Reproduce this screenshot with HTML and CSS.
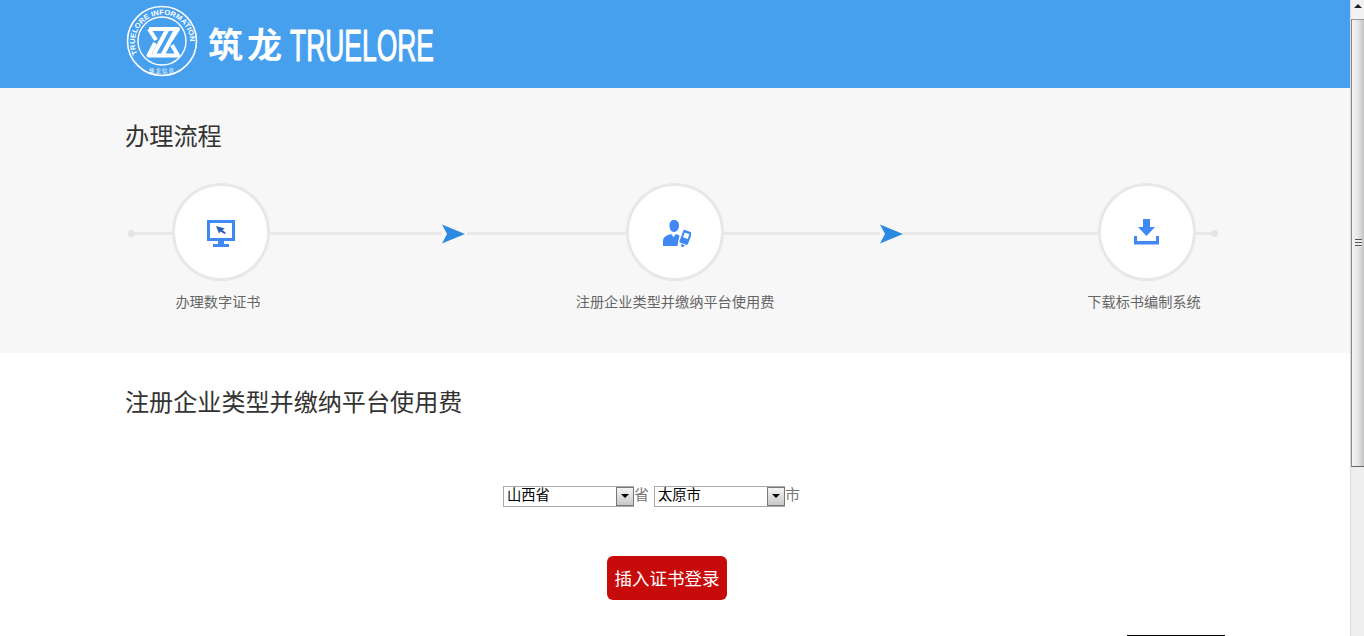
FILE: index.html
```html
<!DOCTYPE html>
<html lang="zh-CN">
<head>
<meta charset="utf-8">
<title>办理流程</title>
<link rel="stylesheet" href="styles.css">
</head>
<body>
<div class="window">
  <main class="page">
    <header class="topbar">
      <div class="container">
        <svg class="logo" width="500" height="88" viewBox="0 0 500 88">
          <defs><path id="ringTop" d="M12.500 54 A27.600 27.600 0 1 1 62.500 54"/></defs>
          <circle cx="37" cy="41" r="34.500" fill="none" stroke="#fff" stroke-width="1.600"/>
          <circle cx="37" cy="41" r="24" fill="none" stroke="#fff" stroke-width="1.400"/>
          <text class="ring-text" textLength="98" lengthAdjust="spacingAndGlyphs"><textPath href="#ringTop">TRUELORE INFORMATION</textPath></text>
          <text class="ring-cn" x="37" y="72.500" text-anchor="middle">筑龙信息</text>
          <path d="M24 29 H53 L46 40 M30 43 L23.500 55.500 H53 L47 45 M24 29 L31 40" fill="none" stroke="#fff" stroke-width="4" stroke-linejoin="round"/>
          <path d="M42 30 L29 54 M51 30 L38 54" fill="none" stroke="#fff" stroke-width="4.200"/>
          <text class="logo-cn" x="83" y="58" textLength="74" lengthAdjust="spacing">筑龙</text>
          <text class="logo-en" x="165" y="60.500" textLength="144" lengthAdjust="spacingAndGlyphs">TRUELORE</text>
        </svg>
      </div>
    </header>

    <section class="process">
      <div class="container">
        <h2 class="heading">办理流程</h2>
        <div class="flow">
          <span class="line line-start"></span>
          <div class="step">
            <div class="circle">
              <svg width="32" height="32" viewBox="0 0 32 32">
                <path fill="#4088f4" fill-rule="evenodd" d="M2 4H30V25H19V28H24V31H8V28H13V25H2ZM5 7V22H27V7Z"/>
                <path fill="#2e5fb8" d="M11 10L20 12.500L17.500 14L21 17L19.500 18L15.500 15.500L14 17.500Z"/>
              </svg>
            </div>
            <p class="label label-shift">办理数字证书</p>
          </div>
          <span class="line line-a"></span>
          <svg class="arrow" width="23" height="20" viewBox="0 0 23 20"><path fill="#2d8ae2" d="M0 0.500L23 10L0 19.500L5 10Z"/></svg>
          <span class="line line-b"></span>
          <div class="step">
            <div class="circle">
              <svg width="32" height="32" viewBox="0 0 32 32">
                <path fill="#4088f4" d="M15 4C18.500 4 20 6.500 20 9.500C20 13 18 16 15 16C12 16 10.500 13 10.500 9.500C10.500 6.500 11.500 4 15 4Z"/>
                <path fill="#4088f4" d="M4 30V25C4 21 8 19 12 18L14.500 21L17 18L20.500 19.500L18.500 30Z"/>
                <g transform="rotate(20 26 23)">
                  <rect x="20.500" y="13.500" width="11" height="15" rx="1.500" fill="#fff"/>
                  <rect x="21.500" y="14.500" width="9" height="13.500" rx="1.500" fill="#4088f4"/>
                  <rect x="23.500" y="17" width="5" height="5" fill="#fff"/>
                  <path fill="#4088f4" d="M23.500 29H28.500L26 32Z"/>
                </g>
              </svg>
            </div>
            <p class="label">注册企业类型并缴纳平台使用费</p>
          </div>
          <span class="line line-c"></span>
          <svg class="arrow" width="23" height="20" viewBox="0 0 23 20"><path fill="#2d8ae2" d="M0 0.500L23 10L0 19.500L5 10Z"/></svg>
          <span class="line line-d"></span>
          <div class="step">
            <div class="circle">
              <svg width="32" height="32" viewBox="0 0 32 32">
                <path fill="#4088f4" d="M12 3H19V11H24L15.500 20L7 11H12Z"/>
                <path fill="#4088f4" d="M3 20H6V25H25V20H28V28.500H3Z"/>
              </svg>
            </div>
            <p class="label label-shift">下载标书编制系统</p>
          </div>
          <span class="line line-end"></span>
        </div>
      </div>
    </section>

    <section class="register">
      <div class="container">
        <h2 class="heading heading-wide">注册企业类型并缴纳平台使用费</h2>
        <form class="region">
          <span class="select-box">
            <select class="select"><option>山西省</option></select>
            <span class="select-arrow"></span>
          </span>
          <span class="unit">省</span>
          <span class="select-box">
            <select class="select"><option>太原市</option></select>
            <span class="select-arrow"></span>
          </span>
          <span class="unit">市</span>
        </form>
        <div class="action"><button class="login" type="button">插入证书登录</button></div>
        <div class="foot"><span class="foot-rule"></span></div>
      </div>
    </section>
  </main>

  <aside class="scrollbar">
    <div class="scroll-up"></div>
    <div class="scroll-thumb"><span class="grip"></span></div>
    <div class="scroll-track"></div>
  </aside>
</div>
</body>
</html>
```

FILE: styles.css
```css
* { box-sizing: border-box; }

html, body {
  margin: 0;
  height: 636px;
  overflow: hidden;
  background: #fff;
}

body {
  font-family: "Noto Sans CJK SC", "Liberation Sans", sans-serif;
  color: #333;
}

.window {
  display: flex;
  height: 636px;
  overflow: hidden;
}

.page {
  flex: 1;
  min-width: 0;
}

.container {
  width: 1100px;
  margin: 0 auto;
}

.topbar {
  height: 88px;
  background: #46a0ee;
}

.logo {
  display: block;
}

.ring-text {
  font: bold 7.2px "Liberation Sans", sans-serif;
  fill: #fff;
}

.ring-cn {
  font: 5.5px "Noto Sans CJK SC", sans-serif;
  fill: #fff;
  letter-spacing: 1px;
}

.logo-cn {
  font: bold 35px "Noto Sans CJK SC", sans-serif;
  fill: #fff;
}

.logo-en {
  font: 44px "Liberation Sans Narrow", "Liberation Sans", sans-serif;
  fill: #fff;
  stroke: #fff;
  stroke-width: 1.1px;
}

.process {
  height: 265px;
  padding-top: 31px;
  background: #f7f7f7;
}

.heading {
  margin: 0;
  font-size: 24.2px;
  font-weight: 400;
  line-height: 32px;
  color: #333;
}

.heading-wide {
  font-size: 24.1px;
}

.flow {
  display: flex;
  align-items: flex-start;
  margin-top: 32px;
  padding-left: 3px;
}

.line {
  height: 3px;
  margin-top: 49px;
  background: #e8e8e8;
  position: relative;
}

.line-start { width: 45px; }
.line-a { width: 173px; }
.line-b { width: 160px; margin-left: 2px; }
.line-c { width: 157px; }
.line-d { width: 196px; }
.line-end { width: 23px; }

.line-start::before,
.line-end::after {
  content: "";
  position: absolute;
  top: -2px;
  width: 7px;
  height: 7px;
  border-radius: 50%;
  background: #e4e4e4;
}

.line-start::before { left: 0; }
.line-end::after { right: 0; }

.arrow {
  flex: none;
  margin-top: 41px;
}

.step {
  width: 96px;
  flex: none;
  display: flex;
  flex-direction: column;
  align-items: center;
}

.circle {
  width: 98px;
  height: 98px;
  flex: none;
  display: flex;
  align-items: center;
  justify-content: center;
  border: 3px solid #e8e8e8;
  border-radius: 50%;
  background: #fff;
}

.label {
  margin: 11px 0 0;
  font-size: 14.2px;
  line-height: 18px;
  color: #666;
  white-space: nowrap;
}

.label-shift {
  margin-right: 6px;
}

.register {
  padding-top: 32px;
}

.region {
  display: flex;
  justify-content: center;
  align-items: center;
  margin-top: 69px;
  padding-right: 42px;
  height: 21px;
}

.select-box {
  position: relative;
  display: block;
  width: 131px;
  height: 21px;
}

.select {
  display: block;
  width: 100%;
  height: 100%;
  padding: 0 0 3px 3px;
  border: 1px solid #a9a9a9;
  border-radius: 0;
  background: #fff;
  color: #000;
  font: 14.3px "Liberation Sans", "Noto Sans CJK SC", sans-serif;
  appearance: none;
  -webkit-appearance: none;
}

.select-arrow {
  position: absolute;
  top: 1px;
  right: 0;
  width: 18px;
  height: 19px;
  border: 1px solid #777;
  background: linear-gradient(#f4f4f4, #c8c8c8);
  pointer-events: none;
}

.select-arrow::after {
  content: "";
  position: absolute;
  left: 4px;
  top: 6px;
  border-style: solid;
  border-width: 4px 4px 0;
  border-color: #000 transparent transparent;
}

.unit {
  width: 20px;
  font-size: 15px;
  line-height: 19px;
  margin-bottom: 6px;
  color: #777;
}

.action {
  display: flex;
  justify-content: center;
  margin-top: 49px;
  padding-right: 16px;
}

.login {
  width: 120px;
  height: 44px;
  padding: 0 0 2px;
  border: 0;
  border-radius: 6px;
  background: #c70a0a;
  color: #fff;
  font: 17.5px "Noto Sans CJK SC", sans-serif;
}

.foot {
  display: flex;
  justify-content: flex-end;
  margin-top: 35px;
}

.foot-rule {
  display: block;
  width: 98px;
  height: 1px;
  background: #000;
}

.scrollbar {
  width: 14px;
  flex: none;
  display: flex;
  flex-direction: column;
  background: #eee;
  border-left: 1px solid #ddd;
}

.scroll-up {
  height: 19px;
  background: #f2f2f2;
  position: relative;
}

.scroll-up::after {
  content: "";
  position: absolute;
  left: 3px;
  top: 4px;
  border-style: solid;
  border-width: 0 4px 4px;
  border-color: transparent transparent #222;
}

.scroll-thumb {
  height: 448px;
  display: flex;
  align-items: center;
  justify-content: center;
  border-top: 1px solid #999;
  border-bottom: 1px solid #666;
  border-left: 1px solid #888;
  background: linear-gradient(90deg, #f3f3f3, #e8e8e8 45%, #c4c4c4);
}

.grip {
  width: 7px;
  height: 8px;
  background: repeating-linear-gradient(#555 0 1px, #eee 1px 3px);
}

.scroll-track {
  flex: 1;
}
```
